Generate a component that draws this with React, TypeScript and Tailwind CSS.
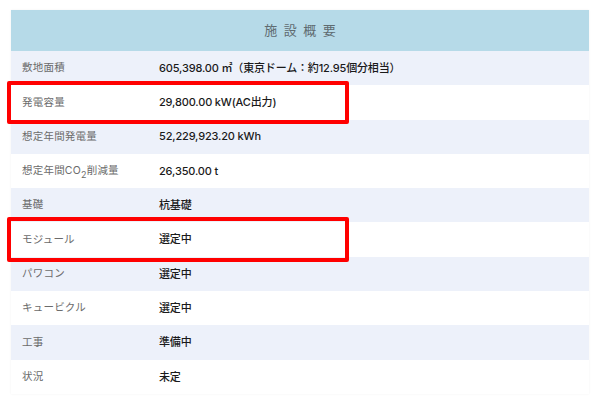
const rows: { label: React.ReactNode; value: React.ReactNode }[] = [
  { label: "敷地面積", value: "605,398.00 ㎡（東京ドーム：約12.95個分相当）" },
  { label: "発電容量", value: "29,800.00 kW(AC出力)" },
  { label: "想定年間発電量", value: "52,229,923.20 kWh" },
  {
    label: (
      <>
        想定年間CO<sub className="text-[9px] align-[-2px]">2</sub>削減量
      </>
    ),
    value: "26,350.00 t",
  },
  { label: "基礎", value: "杭基礎" },
  { label: "モジュール", value: "選定中" },
  { label: "パワコン", value: "選定中" },
  { label: "キュービクル", value: "選定中" },
  { label: "工事", value: "準備中" },
  { label: "状況", value: "未定" },
];

export default function App() {
  return (
    <div
      className="relative w-[600px] h-[419px] bg-white pt-[10px] px-[11px]"
      style={{ fontFamily: 'Inter, "Noto Sans CJK JP", sans-serif' }}
    >
      <div className="shadow-[0_0_2px_rgba(0,0,0,0.06)]">
        {/* Header */}
        <div className="h-[41px] bg-[#b6dae8] flex items-center justify-center">
          <span className="text-[13px] tracking-[0.5em] pl-[0.5em] text-[#5f6b70]">施設概要</span>
        </div>

        {rows.map((row, i) => (
          <div
            key={i}
            className={`h-[34.3px] flex items-center ${i % 2 === 0 ? "bg-[#edf1fa]" : "bg-white"}`}
          >
            <div className="w-[148px] pl-[11px] text-[10.5px] text-[#6b6b6b] tracking-[0.02em]">
              {row.label}
            </div>
            <div className="text-[11px] font-medium text-[#1a1a1a] tracking-[-0.015em]">{row.value}</div>
          </div>
        ))}
      </div>

      {/* Annotation boxes */}
      <div className="absolute left-[7px] top-[81px] w-[342px] h-[43px] border-[4px] border-[#ff0000] rounded-[2px]" />
      <div className="absolute left-[7px] top-[217px] w-[342px] h-[45px] border-[4px] border-[#ff0000] rounded-[2px]" />
    </div>
  );
}
